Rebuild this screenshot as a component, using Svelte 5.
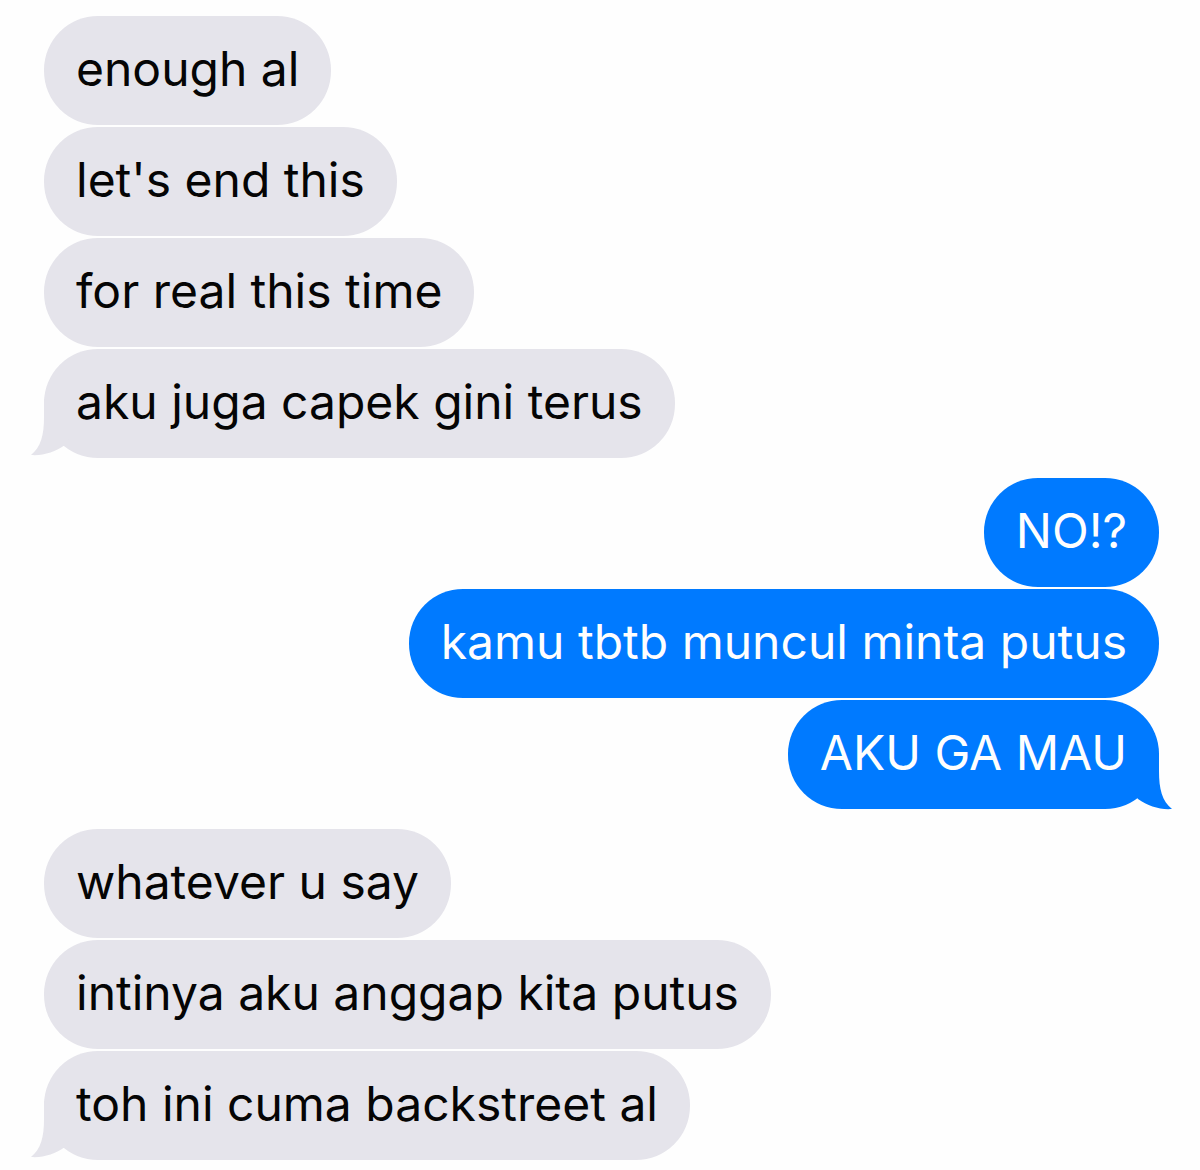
<script>
  const groups = [
    {
      from: 'them',
      messages: ['enough al', "let's end this", 'for real this time', 'aku juga capek gini terus']
    },
    {
      from: 'me',
      messages: ['NO!?', 'kamu tbtb muncul minta putus', 'AKU GA MAU']
    },
    {
      from: 'them',
      messages: ['whatever u say', 'intinya aku anggap kita putus', 'toh ini cuma backstreet al']
    }
  ];
</script>

<main class="chat">
  {#each groups as group}
    <section class="group {group.from}">
      {#each group.messages as message, i}
        <div class="bubble">
          <p>{message}</p>
          <!-- only the last bubble of a group has a tail -->
          {#if i === group.messages.length - 1}
            <svg class="tail" viewBox="0 0 46 60" aria-hidden="true">
              <path d="M13 0 V18 C13 36 10 48 0 56 C12 57 24 53 34 46 L46 30 V0 Z" />
            </svg>
          {/if}
        </div>
      {/each}
    </section>
  {/each}
</main>

<style>
  :global(body) {
    margin: 0;
    background: #fefefe;
  }

  .chat {
    display: flex;
    flex-direction: column;
    gap: 20px;
    padding: 16px 41px 9px 44px;
    font-family: Inter, 'Liberation Sans', sans-serif;
    font-size: 48px;
    line-height: 60px;
  }

  .group {
    display: flex;
    flex-direction: column;
    align-items: flex-start;
    gap: 2px;
  }

  .group.me {
    align-items: flex-end;
  }

  .bubble {
    position: relative;
    box-sizing: border-box;
    padding: 23px 32px 26px;
    border-radius: 54px;
    background: #e5e4eb;
    color: #050505;
  }

  .me .bubble {
    background: #007aff;
    color: #fefefe;
  }

  p {
    margin: 0;
  }

  .tail {
    position: absolute;
    left: -13px;
    bottom: -1px;
    width: 46px;
    height: 60px;
    fill: #e5e4eb;
  }

  .me .tail {
    left: auto;
    right: -13px;
    bottom: -4px;
    fill: #007aff;
    transform: scaleX(-1);
  }
</style>
